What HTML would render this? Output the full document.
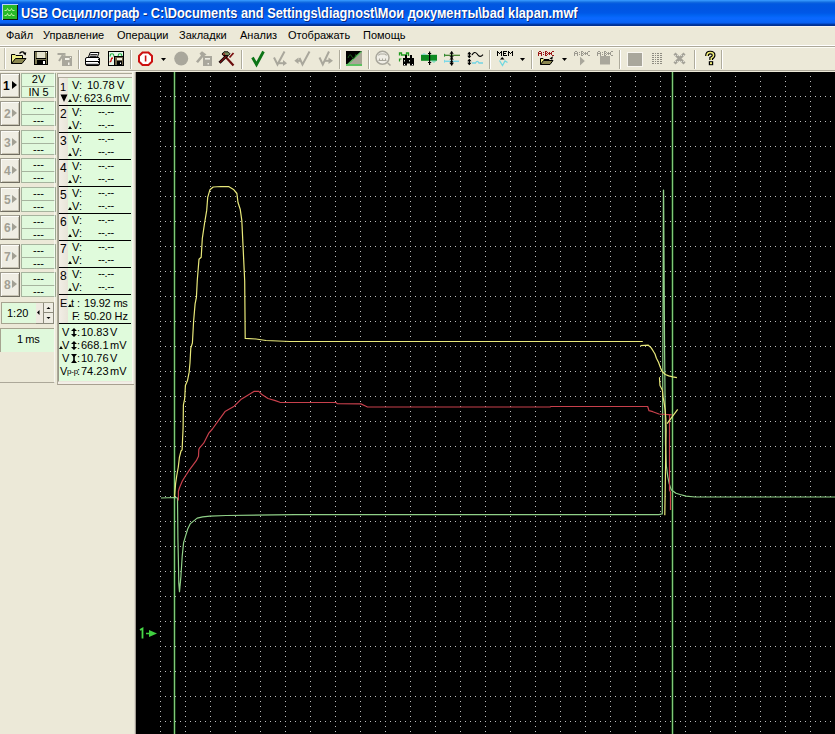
<!DOCTYPE html>
<html><head><meta charset="utf-8"><style>
*{margin:0;padding:0;box-sizing:border-box}
html,body{width:835px;height:734px;overflow:hidden;background:#ece9d8;font-family:"Liberation Sans",sans-serif;position:relative}
.a{position:absolute}
#title{left:0;top:0;width:835px;height:26px;background:linear-gradient(to bottom,#3a9cff 0px,#2a8af5 1px,#1570e0 2px,#0a5fe0 3px,#0058e0 4px,#0055e3 9px,#0058e8 13px,#0062f0 15px,#0a68ff 18px,#0a66fa 21px,#0a60f0 23px,#0040b8 24px,#003090 25px,#003090 26px)}
#ttext{left:21px;top:5px;color:#fff;font-weight:bold;font-size:14px;white-space:pre;transform-origin:0 0;transform:scaleX(0.912);text-shadow:1px 1px 0 #0a2a80}
#menu{left:0;top:26px;width:835px;height:19px;background:#ece9d8;border-top:1px solid #f6f4f2}
#menu span{position:absolute;top:2px;font-size:11px;color:#000;white-space:pre}
.t{position:absolute;white-space:pre;color:#000;font-size:11px;line-height:12px}
.btn{position:absolute;left:0;width:20px;height:25px;background:#efede3;border:1px solid #a09d90;border-right-color:#716e62;border-bottom-color:#716e62;box-shadow:inset 1px 1px 0 #fcfcf8,inset -1px -1px 0 #c8c4b4}
.btn b{position:absolute;left:2px;top:6px;font-size:12px;line-height:12px;font-weight:bold}
.btn i{position:absolute;left:11px;top:7px;width:0;height:0;border-top:4.5px solid transparent;border-bottom:4.5px solid transparent;border-left:5px solid #000}
.g b{color:#a2a094;left:3px}
.g i{border-left-color:#a2a094}
.fld{position:absolute;left:21px;width:35px;background:#e0f9dc;border:1px solid #a6b49e;border-right-color:#9aa890;font-size:11px;line-height:11px;text-align:center;color:#000}
.mrow{position:absolute;left:59px;width:72px;height:27px;background:#e0fbdc;border-bottom:1px solid #000}
.num{position:absolute;left:0;top:0;width:9px;height:26px;background:linear-gradient(to right,#f2eee6,#e8e4d8)}
</style></head><body>
<div id="title" class="a"></div>
<svg class="a" style="left:0;top:0" width="21" height="26" viewBox="0 0 21 26"><rect x="2" y="4" width="16" height="16" fill="#b8d4f8"/><rect x="3" y="5" width="15" height="15" fill="#0c140c"/><rect x="3" y="5" width="14" height="14" fill="#28b828"/><path d="M4.5 10.5h2l1-2 1 2h2l1-2 1 2h2" stroke="#b8f0a0" stroke-width="1" fill="none"/><path d="M4.5 15.5h2l1-2 1 2h2l1-2 1 2h2" stroke="#b8f0a0" stroke-width="1" fill="none"/></svg>
<div id="ttext" class="a">USB Осциллограф - C:\Documents and Settings\diagnost\Мои документы\bad klapan.mwf</div>
<div id="menu" class="a"><span style="left:6px">Файл</span><span style="left:43px">Управление</span><span style="left:117px">Операции</span><span style="left:179px">Закладки</span><span style="left:240px">Анализ</span><span style="left:288px">Отображать</span><span style="left:363px">Помощь</span></div>
<div class="a" style="left:0;top:45px;width:835px;height:1px;background:#fff"></div>
<div class="a" style="left:0;top:46px;width:835px;height:1px;background:#aca899"></div>
<div class="a" style="left:0;top:47px;width:835px;height:1px;background:#fcfcf4"></div>
<div class="a" style="left:0;top:70px;width:835px;height:1px;background:#aca899"></div>
<div class="a" style="left:0;top:71px;width:136px;height:1px;background:#f8f6ee"></div>
<svg class="a" style="left:0;top:0" width="835" height="72" viewBox="0 0 835 72"><rect x="4" y="48" width="1" height="21" fill="#c2bfae"/><rect x="5" y="48" width="1" height="21" fill="#fff"/><rect x="78" y="50" width="1" height="19" fill="#aeab9c"/><rect x="79" y="50" width="1" height="19" fill="#fff"/><rect x="130" y="50" width="1" height="19" fill="#aeab9c"/><rect x="131" y="50" width="1" height="19" fill="#fff"/><rect x="241" y="50" width="1" height="19" fill="#aeab9c"/><rect x="242" y="50" width="1" height="19" fill="#fff"/><rect x="339" y="50" width="1" height="19" fill="#aeab9c"/><rect x="340" y="50" width="1" height="19" fill="#fff"/><rect x="368" y="50" width="1" height="19" fill="#aeab9c"/><rect x="369" y="50" width="1" height="19" fill="#fff"/><rect x="489" y="50" width="1" height="19" fill="#aeab9c"/><rect x="490" y="50" width="1" height="19" fill="#fff"/><rect x="531" y="50" width="1" height="19" fill="#aeab9c"/><rect x="532" y="50" width="1" height="19" fill="#fff"/><rect x="619" y="50" width="1" height="19" fill="#aeab9c"/><rect x="620" y="50" width="1" height="19" fill="#fff"/><rect x="694" y="50" width="1" height="19" fill="#aeab9c"/><rect x="695" y="50" width="1" height="19" fill="#fff"/><rect x="721" y="50" width="1" height="19" fill="#aeab9c"/><rect x="722" y="50" width="1" height="19" fill="#fff"/><path d="M19.5 53.5 Q22 50.5 24.5 52.8" stroke="#000" stroke-width="1.3" fill="none"/><path d="M23 53.2 L26.3 52.2 L25.6 55.6 Z" fill="#000"/><path d="M11.5 63.5 V54.5 H15 L16 55.5 H22.5 V58.5" fill="#eeee88" stroke="#000" stroke-width="1"/><path d="M11.5 63.5 L15.5 58.5 H26 L22 63.5 Z" fill="#8a8650" stroke="#000" stroke-width="1"/><rect x="34.5" y="51.5" width="13" height="13" fill="#7e7a56" stroke="#000"/><rect x="37" y="52" width="8" height="6" fill="#e4e2cc"/><rect x="36" y="58" width="10" height="1" fill="#000"/><rect x="37" y="60" width="9" height="4" fill="#000"/><rect x="43" y="61" width="2" height="3" fill="#fff"/><rect x="46" y="52" width="1" height="1" fill="#fff"/><rect x="62" y="56" width="10" height="10" fill="#a9a79c"/><rect x="65" y="58" width="4.5" height="2" fill="#f4f2ea"/><rect x="68" y="62.5" width="1.5" height="2.5" fill="#f4f2ea"/><rect x="70" y="57" width="1" height="1" fill="#f4f2ea"/><path d="M57.5 54 H63.5 L59 61" stroke="#a9a79c" stroke-width="2" fill="none"/><path d="M64.8 53 V56.5" stroke="#a9a79c" stroke-width="1.3"/><path d="M88.5 57 L90.2 52.5 H99 L97.5 57" fill="#fff" stroke="#000"/><path d="M90.3 54.7 H97.3 M89.7 56.3 H96.7" stroke="#000" stroke-width="1"/><rect x="85.5" y="57.5" width="14" height="8" rx="1.5" fill="#fff" stroke="#000"/><rect x="86" y="61" width="13" height="1" fill="#000"/><rect x="86" y="63.8" width="13" height="1" fill="#000"/><g fill="#000"><rect x="98" y="57" width="1" height="1"/><rect x="99" y="58" width="1" height="1"/><rect x="98" y="59" width="1" height="1"/><rect x="99" y="60" width="1" height="1"/><rect x="98" y="62" width="1" height="1"/><rect x="99" y="63" width="1" height="1"/></g><rect x="108.5" y="51.5" width="15" height="14" fill="#e6f6e8" stroke="#000"/><path d="M110.2 56.5 V55.5 Q110.2 53.8 112 53.8 Q113.8 53.8 113.8 55.5 V56.5 M118.2 56.5 V55.5 Q118.2 53.8 120 53.8 Q121.8 53.8 121.8 55.5 V56.5" stroke="#22b040" stroke-width="1.1" fill="none"/><path d="M109.6 61.8 Q111.2 61.8 111.2 59.8 Q111.2 58 113 58" stroke="#d01010" stroke-width="1.3" fill="none"/><rect x="114.5" y="56.5" width="9" height="9" fill="#6e6448" stroke="#000"/><rect x="117" y="58" width="5" height="2" fill="#f0f0e0"/><rect x="117" y="61" width="5" height="4" fill="#000"/><rect x="120" y="62.5" width="1" height="1.5" fill="#fff"/><path d="M142.5 52.5 H148.5 L152 56 V61.5 L148.5 65 H142.5 L139 61.5 V56 Z" fill="#fff" stroke="#cc1010" stroke-width="2"/><rect x="144.8" y="55.5" width="1.6" height="6" fill="#cc1010"/><path d="M161 58 H166 L163.5 61 Z" fill="#000"/><path d="M520 58 H525 L522.5 61 Z" fill="#000"/><path d="M562 58 H567 L564.5 61 Z" fill="#000"/><circle cx="181.2" cy="58.6" r="7" fill="#a9a79c"/><g fill="#a9a79c"><rect x="203" y="56" width="9" height="10"/><path d="M196 61.5 L201 55.5 L199.5 53.5 L202 51.3 L206.5 54.5 L203.5 56.5 L198 63 Z"/></g><rect x="205" y="58" width="5" height="1.6" fill="#ecebe2"/><rect x="207.5" y="63" width="1.5" height="1.5" fill="#ecebe2"/><path d="M222.5 53.5 L233.5 65.5" stroke="#6a0c0c" stroke-width="2.2"/><path d="M229.5 57.5 L233.5 53" stroke="#7a1010" stroke-width="1.8"/><path d="M219.5 62.8 L227.5 55" stroke="#000" stroke-width="2.8"/><path d="M219.8 62.5 L227.5 55" stroke="#7a1212" stroke-width="1.2"/><path d="M222 54 L224 51.8 H228 L230 53.8 L228.5 55.5 H223.5 Z" fill="#7a8c5c" stroke="#000" stroke-width="0.9"/><path d="M222.5 54.2 L224.2 52.8 L225.5 55.2 Z" fill="#901818"/><path d="M252.5 57.5 L256.5 64.5 L263.5 51.5" stroke="#0c7416" stroke-width="2.8" fill="none"/><g stroke="#a9a79c" stroke-width="2" fill="none"><path d="M274 57.5 L277.5 64.5 L284.5 51.5"/><path d="M279 63.2 H284"/><path d="M299.5 58 L302.5 64.5 L309.5 51.5"/><path d="M296 60.8 H300.5"/><path d="M319.5 57.5 L322.8 64.5 L329 51.5"/><path d="M325 60.8 H330"/></g><g fill="#a9a79c"><path d="M283 60 L287 63.3 L283 66 Z"/><path d="M298.5 57.5 L294.3 60.8 L298.5 64 Z"/><path d="M328.5 57.5 L333 60.8 L328.5 64 Z"/></g><rect x="346" y="51" width="16" height="15" fill="#a8a696"/><path d="M346 51 H362 L346 66 Z" fill="#000"/><path d="M346.5 65.5 L361.5 51.5" stroke="#5cc060" stroke-width="1.2"/><rect x="346" y="64" width="16" height="2" fill="#5cc060"/><path d="M348 58 Q350 52 352 57 Q354 61 356 54" stroke="#1a5a1a" stroke-width="1" fill="none"/><circle cx="382.5" cy="57.8" r="6.5" fill="#f0eee6" stroke="#a9a79c" stroke-width="1.5"/><path d="M378.5 55.5 Q379 54 380.5 54 H384.5 Q386 54 386.5 55.5" stroke="#a9a79c" stroke-width="1.1" fill="none"/><path d="M378.5 60.5 H386.5 M379.5 58.5 V61 M382.5 58.5 V61 M385.5 58.5 V61" stroke="#a9a79c" stroke-width="1.1" fill="none"/><path d="M387.8 63 L390.5 65.5" stroke="#a9a79c" stroke-width="1.6"/><path d="M399.5 55.5 V53 H401.5 V55 H406.5 V53 H408.5 V56" stroke="#1e9a1e" stroke-width="1.3" fill="none"/><path d="M399.5 61.5 V59 H401.5" stroke="#1e9a1e" stroke-width="1.2" fill="none"/><g fill="#000"><rect x="405" y="55" width="2" height="4"/><rect x="410" y="55" width="2" height="4"/><rect x="403" y="58" width="11" height="5.5"/><rect x="403" y="63" width="4" height="2.5"/><rect x="410" y="63" width="4" height="2.5"/></g><rect x="404" y="60" width="1" height="1.5" fill="#c8d8c8"/><rect x="409" y="60" width="1" height="1.5" fill="#c8d8c8"/><rect x="404" y="64" width="1" height="1" fill="#fff"/><rect x="412" y="64" width="1" height="1" fill="#fff"/><rect x="421" y="54.8" width="16" height="6" fill="#0e8a22"/><path d="M421 55 L424 53 L427 55 Z" fill="#7ad8d0" opacity="0.7"/><path d="M430 60.5 L434 63 L437 60.5 Z" fill="#5ad8b0" opacity="0.7"/><rect x="429" y="51.5" width="1.2" height="13.5" fill="#000"/><rect x="428" y="53" width="3.2" height="1" fill="#000"/><rect x="428" y="62" width="3.2" height="1" fill="#000"/><rect x="446" y="54.7" width="14" height="1.2" fill="#3a7a26"/><path d="M444 53.5 V57 L446.5 55.2 Z" fill="#2e8a2e"/><rect x="446" y="60.6" width="13" height="1.4" fill="#7ad8e8"/><path d="M444 59.5 V63 L446.5 61.2 Z" fill="#7ad8e8"/><rect x="451" y="51.5" width="1.3" height="14" fill="#000"/><path d="M449.5 53.8 H453.8 L451.6 51.3 Z M449.5 56.2 H453.8 L451.6 58.5 Z M449.5 59.5 H453.8 L451.6 57.2 Z M449.5 62.5 H453.8 L451.6 60.2 Z M449.5 63 H453.8 L451.6 65.5 Z" fill="#000"/><g fill="#000"><rect x="468.7" y="52.5" width="1.3" height="5"/><rect x="468.7" y="59.5" width="1.3" height="5"/><path d="M467.2 54.2 H471.5 L469.3 51.8 Z M467.2 55.8 H471.5 L469.3 58.2 Z M467.2 61.2 H471.5 L469.3 58.8 Z M467.2 62.8 H471.5 L469.3 65.2 Z"/></g><path d="M472 55 Q474.5 50.5 477.2 54 Q479.8 58.5 483 54.6" stroke="#000" stroke-width="1.1" fill="none"/><path d="M472 63 H475.5 Q477.3 59.8 479 63 H483" stroke="#70d4e4" stroke-width="1.3" fill="none"/><g fill="#000"><rect x="497" y="51" width="1" height="1"/><rect x="501" y="51" width="1" height="1"/><rect x="497" y="52" width="1" height="1"/><rect x="498" y="52" width="1" height="1"/><rect x="500" y="52" width="1" height="1"/><rect x="501" y="52" width="1" height="1"/><rect x="497" y="53" width="1" height="1"/><rect x="499" y="53" width="1" height="1"/><rect x="501" y="53" width="1" height="1"/><rect x="497" y="54" width="1" height="1"/><rect x="501" y="54" width="1" height="1"/><rect x="497" y="55" width="1" height="1"/><rect x="501" y="55" width="1" height="1"/></g><g fill="#000"><rect x="503" y="51" width="1" height="1"/><rect x="504" y="51" width="1" height="1"/><rect x="505" y="51" width="1" height="1"/><rect x="506" y="51" width="1" height="1"/><rect x="503" y="52" width="1" height="1"/><rect x="503" y="53" width="1" height="1"/><rect x="504" y="53" width="1" height="1"/><rect x="505" y="53" width="1" height="1"/><rect x="503" y="54" width="1" height="1"/><rect x="503" y="55" width="1" height="1"/><rect x="504" y="55" width="1" height="1"/><rect x="505" y="55" width="1" height="1"/><rect x="506" y="55" width="1" height="1"/></g><g fill="#000"><rect x="508" y="51" width="1" height="1"/><rect x="512" y="51" width="1" height="1"/><rect x="508" y="52" width="1" height="1"/><rect x="509" y="52" width="1" height="1"/><rect x="511" y="52" width="1" height="1"/><rect x="512" y="52" width="1" height="1"/><rect x="508" y="53" width="1" height="1"/><rect x="510" y="53" width="1" height="1"/><rect x="512" y="53" width="1" height="1"/><rect x="508" y="54" width="1" height="1"/><rect x="512" y="54" width="1" height="1"/><rect x="508" y="55" width="1" height="1"/><rect x="512" y="55" width="1" height="1"/></g><path d="M500 59.5 H504.5 L502.2 57 Z" fill="#000"/><path d="M499.5 60.5 L502.5 65.5 L505 61 L507.5 62.5" stroke="#70d8e0" stroke-width="1.3" fill="none"/><g fill="#9a1818"><rect x="539" y="51" width="1" height="1"/><rect x="540" y="51" width="1" height="1"/><rect x="538" y="52" width="1" height="1"/><rect x="541" y="52" width="1" height="1"/><rect x="538" y="53" width="1" height="1"/><rect x="539" y="53" width="1" height="1"/><rect x="540" y="53" width="1" height="1"/><rect x="541" y="53" width="1" height="1"/><rect x="538" y="54" width="1" height="1"/><rect x="541" y="54" width="1" height="1"/><rect x="538" y="55" width="1" height="1"/><rect x="541" y="55" width="1" height="1"/></g><g fill="#9a1818"><rect x="543" y="52" width="1" height="1"/><rect x="543" y="54" width="1" height="1"/></g><g fill="#9a1818"><rect x="545" y="51" width="1" height="1"/><rect x="546" y="51" width="1" height="1"/><rect x="545" y="52" width="1" height="1"/><rect x="547" y="52" width="1" height="1"/><rect x="545" y="53" width="1" height="1"/><rect x="546" y="53" width="1" height="1"/><rect x="545" y="54" width="1" height="1"/><rect x="547" y="54" width="1" height="1"/><rect x="545" y="55" width="1" height="1"/><rect x="546" y="55" width="1" height="1"/></g><g fill="#9a1818"><rect x="549" y="52" width="1" height="1"/><rect x="548" y="53" width="1" height="1"/><rect x="549" y="53" width="1" height="1"/><rect x="550" y="53" width="1" height="1"/><rect x="549" y="54" width="1" height="1"/></g><g fill="#9a1818"><rect x="552" y="51" width="1" height="1"/><rect x="553" y="51" width="1" height="1"/><rect x="551" y="52" width="1" height="1"/><rect x="551" y="53" width="1" height="1"/><rect x="551" y="54" width="1" height="1"/><rect x="552" y="55" width="1" height="1"/><rect x="553" y="55" width="1" height="1"/></g><path d="M540.5 64.5 V58.5 H543 L544 59.5 H549 V60.5" fill="#eeee88" stroke="#000"/><path d="M540.5 64.5 L543.5 60.5 H553 L550 64.5 Z" fill="#8a8650" stroke="#000"/><path d="M549.5 58.5 L553 56.3 L552.2 59.8 Z" fill="#000"/><g fill="#9c9a90"><rect x="575" y="51" width="1" height="1"/><rect x="576" y="51" width="1" height="1"/><rect x="574" y="52" width="1" height="1"/><rect x="577" y="52" width="1" height="1"/><rect x="574" y="53" width="1" height="1"/><rect x="575" y="53" width="1" height="1"/><rect x="576" y="53" width="1" height="1"/><rect x="577" y="53" width="1" height="1"/><rect x="574" y="54" width="1" height="1"/><rect x="577" y="54" width="1" height="1"/><rect x="574" y="55" width="1" height="1"/><rect x="577" y="55" width="1" height="1"/></g><g fill="#9c9a90"><rect x="579" y="52" width="1" height="1"/><rect x="579" y="54" width="1" height="1"/></g><g fill="#9c9a90"><rect x="581" y="51" width="1" height="1"/><rect x="582" y="51" width="1" height="1"/><rect x="581" y="52" width="1" height="1"/><rect x="583" y="52" width="1" height="1"/><rect x="581" y="53" width="1" height="1"/><rect x="582" y="53" width="1" height="1"/><rect x="581" y="54" width="1" height="1"/><rect x="583" y="54" width="1" height="1"/><rect x="581" y="55" width="1" height="1"/><rect x="582" y="55" width="1" height="1"/></g><g fill="#9c9a90"><rect x="585" y="52" width="1" height="1"/><rect x="584" y="53" width="1" height="1"/><rect x="585" y="53" width="1" height="1"/><rect x="586" y="53" width="1" height="1"/><rect x="585" y="54" width="1" height="1"/></g><g fill="#9c9a90"><rect x="588" y="51" width="1" height="1"/><rect x="589" y="51" width="1" height="1"/><rect x="587" y="52" width="1" height="1"/><rect x="587" y="53" width="1" height="1"/><rect x="587" y="54" width="1" height="1"/><rect x="588" y="55" width="1" height="1"/><rect x="589" y="55" width="1" height="1"/></g><path d="M580 56.8 L584.8 61 L580 65.5 Z" fill="#a9a79c"/><rect x="600" y="56" width="10" height="8.5" fill="#a9a79c"/><g fill="#9c9a90"><rect x="598" y="51" width="1" height="1"/><rect x="599" y="51" width="1" height="1"/><rect x="597" y="52" width="1" height="1"/><rect x="600" y="52" width="1" height="1"/><rect x="597" y="53" width="1" height="1"/><rect x="598" y="53" width="1" height="1"/><rect x="599" y="53" width="1" height="1"/><rect x="600" y="53" width="1" height="1"/><rect x="597" y="54" width="1" height="1"/><rect x="600" y="54" width="1" height="1"/><rect x="597" y="55" width="1" height="1"/><rect x="600" y="55" width="1" height="1"/></g><g fill="#9c9a90"><rect x="602" y="52" width="1" height="1"/><rect x="602" y="54" width="1" height="1"/></g><g fill="#9c9a90"><rect x="604" y="51" width="1" height="1"/><rect x="605" y="51" width="1" height="1"/><rect x="604" y="52" width="1" height="1"/><rect x="606" y="52" width="1" height="1"/><rect x="604" y="53" width="1" height="1"/><rect x="605" y="53" width="1" height="1"/><rect x="604" y="54" width="1" height="1"/><rect x="606" y="54" width="1" height="1"/><rect x="604" y="55" width="1" height="1"/><rect x="605" y="55" width="1" height="1"/></g><g fill="#9c9a90"><rect x="608" y="52" width="1" height="1"/><rect x="607" y="53" width="1" height="1"/><rect x="608" y="53" width="1" height="1"/><rect x="609" y="53" width="1" height="1"/><rect x="608" y="54" width="1" height="1"/></g><g fill="#9c9a90"><rect x="611" y="51" width="1" height="1"/><rect x="612" y="51" width="1" height="1"/><rect x="610" y="52" width="1" height="1"/><rect x="610" y="53" width="1" height="1"/><rect x="610" y="54" width="1" height="1"/><rect x="611" y="55" width="1" height="1"/><rect x="612" y="55" width="1" height="1"/></g><rect x="627" y="52" width="16" height="15" fill="#f8f6f0"/><rect x="628" y="53" width="14" height="13" fill="#a9a79c"/><g fill="#8e8c82"><rect x="652" y="53" width="1" height="1"/><rect x="653" y="53" width="1" height="1"/><rect x="655" y="53" width="1" height="1"/><rect x="657" y="53" width="1" height="1"/><rect x="658" y="53" width="1" height="1"/><rect x="660" y="53" width="1" height="1"/><rect x="661" y="53" width="1" height="1"/><rect x="652" y="55" width="1" height="1"/><rect x="653" y="55" width="1" height="1"/><rect x="655" y="55" width="1" height="1"/><rect x="657" y="55" width="1" height="1"/><rect x="658" y="55" width="1" height="1"/><rect x="660" y="55" width="1" height="1"/><rect x="661" y="55" width="1" height="1"/><rect x="652" y="57" width="1" height="1"/><rect x="653" y="57" width="1" height="1"/><rect x="655" y="57" width="1" height="1"/><rect x="657" y="57" width="1" height="1"/><rect x="658" y="57" width="1" height="1"/><rect x="660" y="57" width="1" height="1"/><rect x="661" y="57" width="1" height="1"/><rect x="652" y="59" width="1" height="1"/><rect x="653" y="59" width="1" height="1"/><rect x="655" y="59" width="1" height="1"/><rect x="657" y="59" width="1" height="1"/><rect x="658" y="59" width="1" height="1"/><rect x="660" y="59" width="1" height="1"/><rect x="661" y="59" width="1" height="1"/><rect x="652" y="61" width="1" height="1"/><rect x="653" y="61" width="1" height="1"/><rect x="655" y="61" width="1" height="1"/><rect x="657" y="61" width="1" height="1"/><rect x="658" y="61" width="1" height="1"/><rect x="660" y="61" width="1" height="1"/><rect x="661" y="61" width="1" height="1"/><rect x="652" y="63" width="1" height="1"/><rect x="653" y="63" width="1" height="1"/><rect x="655" y="63" width="1" height="1"/><rect x="657" y="63" width="1" height="1"/><rect x="658" y="63" width="1" height="1"/><rect x="660" y="63" width="1" height="1"/><rect x="661" y="63" width="1" height="1"/></g><path d="M674.5 53.5 L684.5 63.5 M684.5 53.5 L674.5 63.5" stroke="#a4a298" stroke-width="3"/><path d="M675 55.5 H684 M675 61.5 H684" stroke="#ecebe2" stroke-width="0.8" stroke-dasharray="1 1"/><path d="M707 56 Q707 52.6 710.2 52.6 Q713.6 52.6 713.6 55.3 Q713.6 57 711.2 58.2 V60" stroke="#000" stroke-width="3.8" fill="none"/><path d="M707 56 Q707 52.6 710.2 52.6 Q713.6 52.6 713.6 55.3 Q713.6 57 711.2 58.2 V60" stroke="#f0ec78" stroke-width="1.5" fill="none"/><rect x="708.8" y="61.2" width="4.4" height="4" fill="#000"/><rect x="710" y="62.2" width="2" height="2" fill="#f0ec78"/></svg>
<div class="btn" style="top:73px"><b>1</b><i></i></div>
<div class="fld" style="top:73px;height:14px;padding-top:0px">2V</div>
<div class="fld" style="top:86px;height:12px;border-top-color:#a6b49e;padding-top:0px">IN 5</div>
<div class="btn g" style="top:101px"><b>2</b><i></i></div>
<div class="fld" style="top:101px;height:14px;padding-top:0px">---</div>
<div class="fld" style="top:114px;height:12px;border-top-color:#a6b49e;padding-top:0px">---</div>
<div class="btn g" style="top:130px"><b>3</b><i></i></div>
<div class="fld" style="top:130px;height:14px;padding-top:0px">---</div>
<div class="fld" style="top:143px;height:12px;border-top-color:#a6b49e;padding-top:0px">---</div>
<div class="btn g" style="top:158px"><b>4</b><i></i></div>
<div class="fld" style="top:158px;height:14px;padding-top:0px">---</div>
<div class="fld" style="top:171px;height:12px;border-top-color:#a6b49e;padding-top:0px">---</div>
<div class="btn g" style="top:187px"><b>5</b><i></i></div>
<div class="fld" style="top:187px;height:14px;padding-top:0px">---</div>
<div class="fld" style="top:200px;height:12px;border-top-color:#a6b49e;padding-top:0px">---</div>
<div class="btn g" style="top:215px"><b>6</b><i></i></div>
<div class="fld" style="top:215px;height:14px;padding-top:0px">---</div>
<div class="fld" style="top:228px;height:12px;border-top-color:#a6b49e;padding-top:0px">---</div>
<div class="btn g" style="top:244px"><b>7</b><i></i></div>
<div class="fld" style="top:244px;height:14px;padding-top:0px">---</div>
<div class="fld" style="top:257px;height:12px;border-top-color:#a6b49e;padding-top:0px">---</div>
<div class="btn g" style="top:272px"><b>8</b><i></i></div>
<div class="fld" style="top:272px;height:14px;padding-top:0px">---</div>
<div class="fld" style="top:285px;height:12px;border-top-color:#a6b49e;padding-top:0px">---</div>
<div class="a" style="left:1px;top:302px;width:53px;height:22px;border:1px solid #a6a490;border-right:none;background:#ece9d8"></div>
<div class="a" style="left:2px;top:303px;width:34px;height:20px;background:#e0f9dc"></div>
<div class="t" style="left:7px;top:307px">1:20</div>
<svg class="a" style="left:36px;top:303px" width="18" height="21" viewBox="0 0 18 21"><rect x="0" y="0" width="7" height="20" fill="#eeeae0"/><path d="M3.5 7 L1 9.5 L3.5 12 Z" fill="#000"/><rect x="0" y="20" width="18" height="1" fill="#8c8a7c"/><rect x="7" y="0" width="11" height="10" fill="#efede3" stroke="#fff" stroke-width="0"/><rect x="7" y="0" width="1" height="20" fill="#8c8a7c"/><rect x="17" y="0" width="1" height="20" fill="#8c8a7c"/><rect x="8" y="9" width="9" height="1" fill="#8c8a7c"/><rect x="8" y="10" width="9" height="10" fill="#efede3"/><path d="M10.5 6 H14.5 L12.5 4 Z M10.5 14 H14.5 L12.5 16 Z" fill="#000"/></svg>
<div class="a" style="left:0;top:328px;width:54px;height:24px;border-top:1px solid #a6a490;border-left:1px solid #a6a490;background:#e0f9dc"></div>
<div class="t" style="left:17px;top:333px;letter-spacing:-0.4px">1 ms</div>
<div class="a" style="left:0;top:382px;width:55px;height:1px;background:#aca899"></div>
<div class="a" style="left:54px;top:72px;width:1px;height:311px;background:#fff;opacity:.6"></div>
<div class="a" style="left:57px;top:73px;width:78px;height:312px;border-top:1px solid #aca899;border-left:1px solid #aca899;border-bottom:1px solid #a8a090;background:#f2eee6"></div>
<div class="a" style="left:58px;top:77px;width:74px;height:305px;border-top:1px solid #b0ac9c;border-left:1px solid #9c9a8a;border-bottom:1px solid #ece6dc;background:#e0fbdc"></div>
<div class="a" style="left:132px;top:72px;width:1px;height:312px;background:#f8f8ec"></div>
<div class="a" style="left:133px;top:72px;width:1px;height:312px;background:#eeeae0"></div>
<div class="a" style="left:134px;top:72px;width:1px;height:662px;background:#dcd8cc"></div>
<div class="a" style="left:135px;top:72px;width:1px;height:662px;background:#a09a90"></div>
<div class="mrow" style="top:78px;height:28px"><div class="num" style="height:27px"></div></div>
<div class="t" style="left:60px;top:81px;font-size:11px">1</div>
<div class="t" style="left:72px;top:79px">V:</div>
<div class="t" style="left:72px;top:92px">V:</div>
<svg class="a" style="left:68px;top:99px" width="4" height="3" viewBox="0 0 4 3"><path d="M0 3 L2 0 L4 3 Z" fill="#000"/></svg>
<div class="t" style="left:87px;top:79px">10.78</div><div class="t" style="left:117px;top:79px">V</div>
<div class="t" style="left:84px;top:92px">623.6</div><div class="t" style="left:113px;top:92px">mV</div>
<svg class="a" style="left:60px;top:94px" width="8" height="8" viewBox="0 0 8 8"><path d="M0.5 0.5 H7.5 L4 8 Z" fill="#000"/></svg>
<div class="mrow" style="top:106px;height:27px"><div class="num" style="height:26px"></div></div>
<div class="t" style="left:60px;top:108px;font-size:12px">2</div>
<div class="t" style="left:72px;top:106px">V:</div>
<div class="t" style="left:72px;top:119px">V:</div>
<svg class="a" style="left:68px;top:126px" width="4" height="3" viewBox="0 0 4 3"><path d="M0 3 L2 0 L4 3 Z" fill="#000"/></svg>
<div class="t" style="left:98px;top:105px;letter-spacing:-0.4px">--.--</div>
<div class="t" style="left:98px;top:118px;letter-spacing:-0.4px">--.--</div>
<div class="mrow" style="top:133px;height:27px"><div class="num" style="height:26px"></div></div>
<div class="t" style="left:60px;top:135px;font-size:12px">3</div>
<div class="t" style="left:72px;top:133px">V:</div>
<div class="t" style="left:72px;top:146px">V:</div>
<svg class="a" style="left:68px;top:153px" width="4" height="3" viewBox="0 0 4 3"><path d="M0 3 L2 0 L4 3 Z" fill="#000"/></svg>
<div class="t" style="left:98px;top:132px;letter-spacing:-0.4px">--.--</div>
<div class="t" style="left:98px;top:145px;letter-spacing:-0.4px">--.--</div>
<div class="mrow" style="top:160px;height:27px"><div class="num" style="height:26px"></div></div>
<div class="t" style="left:60px;top:162px;font-size:12px">4</div>
<div class="t" style="left:72px;top:160px">V:</div>
<div class="t" style="left:72px;top:173px">V:</div>
<svg class="a" style="left:68px;top:180px" width="4" height="3" viewBox="0 0 4 3"><path d="M0 3 L2 0 L4 3 Z" fill="#000"/></svg>
<div class="t" style="left:98px;top:159px;letter-spacing:-0.4px">--.--</div>
<div class="t" style="left:98px;top:172px;letter-spacing:-0.4px">--.--</div>
<div class="mrow" style="top:187px;height:27px"><div class="num" style="height:26px"></div></div>
<div class="t" style="left:60px;top:189px;font-size:12px">5</div>
<div class="t" style="left:72px;top:187px">V:</div>
<div class="t" style="left:72px;top:200px">V:</div>
<svg class="a" style="left:68px;top:207px" width="4" height="3" viewBox="0 0 4 3"><path d="M0 3 L2 0 L4 3 Z" fill="#000"/></svg>
<div class="t" style="left:98px;top:186px;letter-spacing:-0.4px">--.--</div>
<div class="t" style="left:98px;top:199px;letter-spacing:-0.4px">--.--</div>
<div class="mrow" style="top:214px;height:27px"><div class="num" style="height:26px"></div></div>
<div class="t" style="left:60px;top:216px;font-size:12px">6</div>
<div class="t" style="left:72px;top:214px">V:</div>
<div class="t" style="left:72px;top:227px">V:</div>
<svg class="a" style="left:68px;top:234px" width="4" height="3" viewBox="0 0 4 3"><path d="M0 3 L2 0 L4 3 Z" fill="#000"/></svg>
<div class="t" style="left:98px;top:213px;letter-spacing:-0.4px">--.--</div>
<div class="t" style="left:98px;top:226px;letter-spacing:-0.4px">--.--</div>
<div class="mrow" style="top:241px;height:27px"><div class="num" style="height:26px"></div></div>
<div class="t" style="left:60px;top:243px;font-size:12px">7</div>
<div class="t" style="left:72px;top:241px">V:</div>
<div class="t" style="left:72px;top:254px">V:</div>
<svg class="a" style="left:68px;top:261px" width="4" height="3" viewBox="0 0 4 3"><path d="M0 3 L2 0 L4 3 Z" fill="#000"/></svg>
<div class="t" style="left:98px;top:240px;letter-spacing:-0.4px">--.--</div>
<div class="t" style="left:98px;top:253px;letter-spacing:-0.4px">--.--</div>
<div class="mrow" style="top:268px;height:27px"><div class="num" style="height:26px"></div></div>
<div class="t" style="left:60px;top:270px;font-size:12px">8</div>
<div class="t" style="left:72px;top:268px">V:</div>
<div class="t" style="left:72px;top:281px">V:</div>
<svg class="a" style="left:68px;top:288px" width="4" height="3" viewBox="0 0 4 3"><path d="M0 3 L2 0 L4 3 Z" fill="#000"/></svg>
<div class="t" style="left:98px;top:267px;letter-spacing:-0.4px">--.--</div>
<div class="t" style="left:98px;top:280px;letter-spacing:-0.4px">--.--</div>
<div class="mrow" style="top:295px;height:29px"><div class="num" style="height:28px"></div></div>
<div class="t" style="left:60px;top:297px">E</div>
<svg class="a" style="left:68px;top:304px" width="4" height="3" viewBox="0 0 4 3"><path d="M0 3 L2 0 L4 3 Z" fill="#000"/></svg>
<div class="t" style="left:71px;top:297px">t</div><div class="t" style="left:77px;top:297px">:</div>
<div class="t" style="left:84px;top:297px;letter-spacing:-0.2px">19.92 ms</div>
<div class="t" style="left:72px;top:310px">F</div><div class="t" style="left:77px;top:310px">:</div>
<div class="t" style="left:84px;top:310px">50.20 Hz</div>
<div class="t" style="left:62px;top:326px">V</div>
<svg class="a" style="left:71px;top:328px" width="6" height="9" viewBox="0 0 6 9"><path d="M0 3 H6 L3 0 Z M0 6 H6 L3 9 Z" fill="#000"/><rect x="2.2" y="2.5" width="1.6" height="4" fill="#000"/></svg>
<div class="t" style="left:77px;top:326px">:</div>
<div class="t" style="left:81px;top:326px">10.83</div>
<div class="t" style="left:110px;top:326px">V</div>
<svg class="a" style="left:59px;top:346px" width="4" height="3" viewBox="0 0 4 3"><path d="M0 3 L2 0 L4 3 Z" fill="#000"/></svg>
<div class="t" style="left:62px;top:339px">V</div>
<svg class="a" style="left:71px;top:341px" width="6" height="9" viewBox="0 0 6 9"><path d="M0 3 H6 L3 0 Z M0 6 H6 L3 9 Z" fill="#000"/><rect x="2.2" y="2.5" width="1.6" height="4" fill="#000"/></svg>
<div class="t" style="left:77px;top:339px">:</div>
<div class="t" style="left:81px;top:339px">668.1</div>
<div class="t" style="left:110px;top:339px">mV</div>
<div class="t" style="left:62px;top:352px">V</div>
<svg class="a" style="left:71px;top:354px" width="6" height="9" viewBox="0 0 6 9"><path d="M0 0 H6 L3 3.5 Z M0 9 H6 L3 5.5 Z" fill="#000"/><rect x="2.2" y="2" width="1.6" height="5" fill="#000"/></svg>
<div class="t" style="left:77px;top:352px">:</div>
<div class="t" style="left:81px;top:352px">10.76</div>
<div class="t" style="left:110px;top:352px">V</div>
<div class="t" style="left:60px;top:365px">V</div><div class="t" style="left:67px;font-size:8px;line-height:8px;top:368px;letter-spacing:-0.2px">p-p</div>
<div class="t" style="left:77px;top:365px">:</div>
<div class="t" style="left:81px;top:365px">74.23</div>
<div class="t" style="left:110px;top:365px">mV</div>
<div class="a" style="left:136px;top:72px;width:699px;height:662px;background:#000"></div>
<svg class="a" style="left:0;top:0" width="835" height="734" viewBox="0 0 835 734"><defs><pattern id="ph" x="160" y="96" width="5" height="25" patternUnits="userSpaceOnUse"><rect x="0" y="0" width="1" height="1" fill="#bcbcbc"/></pattern><pattern id="pv" x="160" y="96" width="25" height="5" patternUnits="userSpaceOnUse"><rect x="0" y="0" width="1" height="1" fill="#bcbcbc"/></pattern></defs><rect x="173" y="72" width="3" height="662" fill="#153515"/><rect x="671" y="72" width="3" height="662" fill="#153515"/><rect x="160" y="72" width="675" height="662" fill="url(#ph)"/><rect x="160" y="72" width="675" height="662" fill="url(#pv)"/><rect x="174" y="72" width="1" height="662" fill="#80c878"/><rect x="672" y="72" width="1" height="662" fill="#80c878"/><polyline points="161,498 175.5,497.5 177.5,498 177.9,538.5 178.4,560.3 178.8,583.4 179.5,591.6 180.9,576.6 182.2,556.2 183.6,542.6 185.6,535.8 187.7,529 190.4,523.6 197.2,518.1 202.7,516.8 210,516.1 226,515.5 295,514.6 659,514.6 661.7,514 662.3,514 663.4,190 663.6,190 664.6,352 665.5,445 666.4,466 667.8,476.8 669.2,483.6 671.2,489.8 672.9,491.1 676,493.2 680,494.5 686,496.2 695,497 835,497" fill="none" stroke="#90d088" stroke-width="1.2" stroke-linejoin="round"/><polyline points="178.4,500.5 178.4,491.2 179.4,488 182.1,481.4 185.4,476 189.8,469.4 196.3,460.7 198.5,456.3 198.8,449.8 199.4,448.1 203.7,443.2 208.6,433.4 212.4,429 217.9,421.4 225,411.6 234.2,406.2 240.8,399.6 246.2,396.3 253.9,391.4 258.8,391.4 261.5,394.2 268,398.5 275.3,400.6 279.9,402.3 335.9,402.5 337.2,403.6 360.9,403.9 364.9,405.8 367.5,407 550,407 551,406.5 647.7,406.5 649,410.7 652.8,411.7 659,414 671.9,414.8" fill="none" stroke="#c8404c" stroke-width="1.2" stroke-linejoin="round"/><polyline points="669.5,414.8 669.5,490 670.5,492 670.5,510" fill="none" stroke="#c8404c" stroke-width="1.2" stroke-linejoin="round"/><polyline points="174.5,497 175.6,483.6 176.7,476 178.3,467 179.4,457.4 181,451 182.1,449.8 183.1,428 183.4,405 184.7,398.6 185.4,385.5 187.5,380.6 189.1,372.4 190,362.7 190.8,348 192.4,343 193.6,321.3 195.1,303.9 196.4,297.4 197.3,280 199,259.3 201.2,257.2 202.3,238.7 204.5,223.5 206.7,210.4 207.7,197.4 209.9,189.8 213.2,187 220.8,186.5 229,186.7 233.5,189.4 236.9,193.5 238,202.5 240.2,209.2 241.8,220.4 243.1,247.4 244.7,281 245.2,338.4 256,339 266,340.5 290,341.5 642.8,341.5" fill="none" stroke="#e8e87a" stroke-width="1.2" stroke-linejoin="round"/><polyline points="640.4,345.6 648.3,345.2 651,347.6 653,350.7 655,354 656.4,358.2 658.5,362.2 660.5,367.7 661.9,371.1 665.3,374.5 668.7,375.9 672.8,376.9 676.9,377.6" fill="none" stroke="#e8e87a" stroke-width="1.2" stroke-linejoin="round"/><polyline points="659.5,377.2 659.6,380 660,385.5 662.4,390.2 663,397 664,401.8 665.1,409.3 665.8,418.2 666.1,430 665.5,470 664.8,515.3" fill="none" stroke="#e8e87a" stroke-width="1.2" stroke-linejoin="round"/><polyline points="677.7,409.3 667.1,423.6" fill="none" stroke="#e8e87a" stroke-width="1.2" stroke-linejoin="round"/></svg>
<svg class="a" style="left:136px;top:620px" width="24" height="24" viewBox="0 0 24 24"><path d="M4 10 L6.5 8.5 V18.5" stroke="#48d848" stroke-width="1.8" fill="none"/><path d="M10 13.5 H14" stroke="#40d040" stroke-width="1.5"/><path d="M13 10 L21 13.5 L13 17 Z" fill="#40d040"/></svg>
</body></html>
